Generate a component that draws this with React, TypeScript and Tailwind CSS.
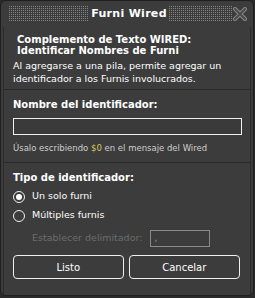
import React from 'react';

const font = { fontFamily: '"DejaVu Sans", "Liberation Sans", sans-serif' };

function Dots({ w }: { w: number }) {
  return (
    <svg width={w} height="16" className="shrink-0">
      <defs>
        <pattern id={`dots-${w}`} width="2" height="2" patternUnits="userSpaceOnUse">
          <rect x="0" y="0" width="1" height="1" fill="#858585" />
        </pattern>
      </defs>
      <rect width={w} height="16" fill={`url(#dots-${w})`} />
    </svg>
  );
}

function Radio({ checked, label }: { checked?: boolean; label: string }) {
  return (
    <div className="flex items-center h-[19px] gap-[7px]">
      <span className="w-[12px] h-[12px] rounded-full border border-[#f0f0f0] flex items-center justify-center">
        {checked && <span className="w-[6px] h-[6px] rounded-full bg-white" />}
      </span>
      <span className="text-[9.5px] text-white">{label}</span>
    </div>
  );
}

export default function App() {
  return (
    <div className="w-[255px] h-[298px] bg-[#2a2a2a]" style={font}>
      <div className="w-[254px] h-[296px] bg-[#3c3c3c] border border-[#1f1f1f] rounded-[6px] flex flex-col overflow-hidden">
        {/* title bar */}
        <div className="h-[26px] flex items-center pl-[8px] pr-[6px] shrink-0">
          <Dots w={80} />
          <div className="flex-1 text-center text-[11px] font-bold text-white tracking-[0.3px]">Furni Wired</div>
          <Dots w={63} />
          <svg width="14" height="14" viewBox="0 0 14 14" className="ml-[1px]">
            <path d="M2 2 L12 12 M12 2 L2 12" stroke="#8a8a8a" strokeWidth="4" strokeLinecap="square" />
            <path d="M2 2 L12 12 M12 2 L2 12" stroke="#4a4a4a" strokeWidth="2" strokeLinecap="square" />
          </svg>
        </div>

        {/* body */}
        <div className="flex-1 mx-[2px] border-x border-[#2c2c2c] flex flex-col">
          <div className="h-[62px] pt-[7px] pl-[9px] pr-[2px]">
            <div className="pl-[4px] text-[10px] font-bold text-white leading-[11px]">
              <div>Complemento de Texto WIRED:</div>
              <div>Identificar Nombres de Furni</div>
            </div>
            <div className="mt-[3px] text-[9.5px] text-white leading-[13px]">
              <div>Al agregarse a una pila, permite agregar un</div>
              <div>identificador a los Furnis involucrados.</div>
            </div>
          </div>

          <div className="h-px bg-[#2a2a2a]" />

          <div className="h-[72px] pl-[9px] pr-[8px] pt-[9px]">
            <div className="text-[10px] font-bold text-white leading-[12px]">Nombre del identificador:</div>
            <div className="mt-[7px] h-[17px] border border-[#f0f0f0] bg-[#3a3a3a]" />
            <div className="mt-[8px] text-[8.5px] text-[#cfcfcf] leading-[10px]">
              Úsalo escribiendo <span className="text-[#d9c85e]">$0</span> en el mensaje del Wired
            </div>
          </div>

          <div className="h-px bg-[#2a2a2a]" />

          <div className="flex-1 pl-[9px] pr-[9px] pt-[9px] flex flex-col">
            <div className="text-[10px] font-bold text-white leading-[12px]">Tipo de identificador:</div>
            <div className="mt-[3px] flex flex-col">
              <Radio checked label="Un solo furni" />
              <Radio label="Múltiples furnis" />
            </div>
            <div className="mt-[5px] flex items-center pl-[19px]">
              <span className="text-[9.5px] text-[#6c6c6c]">Establecer delimitador:</span>
              <div className="ml-[8px] w-[60px] h-[17px] border border-[#8a8a8a] text-[9px] text-[#9a9a9a] pl-[3px] leading-[15px]">,</div>
            </div>
            <div className="mt-[8px] flex gap-[5px] pr-[1px]">
              <button className="w-[111px] h-[24px] border border-[#f0f0f0] rounded-[4px] text-[10px] text-white">Listo</button>
              <button className="w-[112px] h-[24px] border border-[#f0f0f0] rounded-[4px] text-[10px] text-white">Cancelar</button>
            </div>
          </div>
        </div>
      </div>
    </div>
  );
}
